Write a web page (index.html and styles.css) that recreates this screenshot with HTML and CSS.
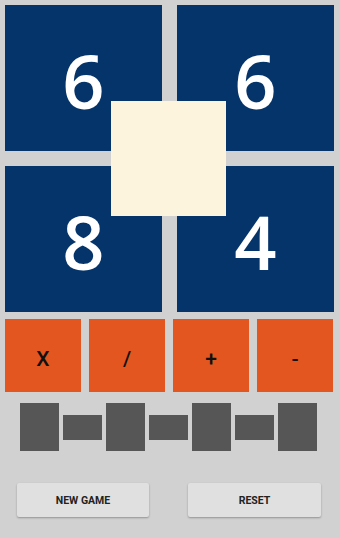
FILE: index.html
```html
<!DOCTYPE html>
<html>
<head>
<meta charset="utf-8">
<link rel="stylesheet" href="styles.css">
</head>
<body>
<div class="app">
  <div class="board">
    <div class="tile"><span class="num">6</span></div>
    <div class="tile"><span class="num">6</span></div>
    <div class="tile"><span class="num">8</span></div>
    <div class="tile"><span class="num">4</span></div>
    <div class="center"></div>
  </div>
  <div class="ops">
    <div class="op">X</div>
    <div class="op">/</div>
    <div class="op">+</div>
    <div class="op">-</div>
  </div>
  <div class="slots">
    <div class="slot big"></div>
    <div class="slot small"></div>
    <div class="slot big"></div>
    <div class="slot small"></div>
    <div class="slot big"></div>
    <div class="slot small"></div>
    <div class="slot big"></div>
  </div>
  <div class="actions">
    <div class="btn">NEW GAME</div>
    <div class="btn">RESET</div>
  </div>
</div>
</body>
</html>
```
FILE: styles.css
```css
html, body {
  margin: 0;
  padding: 0;
  background: #d1d1d1;
  width: 340px;
  height: 538px;
  overflow: hidden;
}
.app {
  padding: 5px 6px 0 5px;
  font-family: "Open Sans", "Noto Sans", sans-serif;
}
.board {
  position: relative;
  display: grid;
  grid-template-columns: 157px 157px;
  grid-template-rows: 146px 146px;
  column-gap: 15px;
  row-gap: 15px;
}
.tile {
  background: #05346a;
  display: flex;
  align-items: center;
  justify-content: center;
}
.num {
  color: #ffffff;
  font-size: 74px;
  font-weight: 600;
  line-height: 1;
  position: relative;
  top: 3px;
}
.center {
  position: absolute;
  left: 106px;
  top: 96px;
  width: 115px;
  height: 115px;
  background: #fcf4dc;
}
.ops {
  margin-top: 7px;
  display: grid;
  grid-template-columns: repeat(4, 76px);
  column-gap: 8px;
}
.op {
  height: 73px;
  background: #e4561f;
  color: #111111;
  font-family: Roboto, "Liberation Sans", sans-serif;
  font-size: 21px;
  font-weight: 500;
  display: flex;
  align-items: center;
  justify-content: center;
  padding-top: 6px;
  box-sizing: border-box;
}
.slots {
  margin-top: 11px;
  margin-left: 15px;
  display: flex;
  align-items: center;
  gap: 4px;
  height: 48px;
}
.slot {
  width: 39px;
  background: #565656;
}
.slot.big {
  height: 48px;
}
.slot.small {
  height: 25px;
}
.actions {
  margin-top: 32px;
  display: flex;
  padding-left: 12px;
  gap: 39px;
}
.btn {
  width: 132px;
  height: 34px;
  background: #e0e0e0;
  border-radius: 2px;
  box-shadow: 0 1px 2px rgba(0,0,0,0.3);
  font-family: Roboto, "Liberation Sans", sans-serif;
  font-weight: 700;
  font-size: 10.5px;
  color: #222222;
  display: flex;
  align-items: center;
  justify-content: center;
}
.btn + .btn {
  width: 133px;
}
```
